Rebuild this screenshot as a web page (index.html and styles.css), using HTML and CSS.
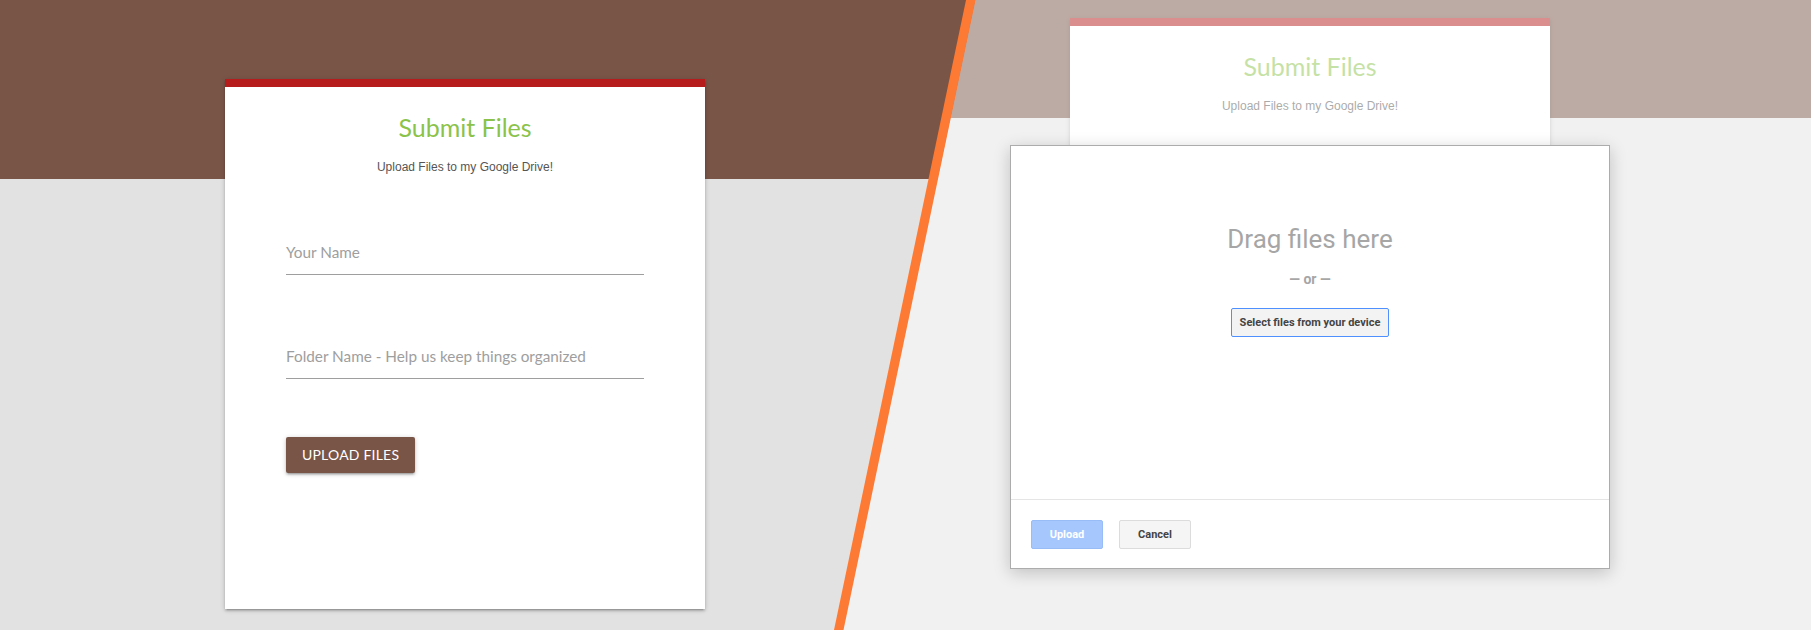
FILE: index.html
```html
<!DOCTYPE html>
<html lang="en">
<head>
<meta charset="utf-8">
<title>Submit Files</title>
<link rel="stylesheet" href="styles.css">
</head>
<body>
<div class="stage">
  <section class="scene scene--live">
    <div class="card">
      <h1 class="card__title">Submit Files</h1>
      <p class="card__subtitle">Upload Files to my Google Drive!</p>
      <form class="form">
        <div class="field"><input type="text" placeholder="Your Name"></div>
        <div class="field"><input type="text" placeholder="Folder Name - Help us keep things organized"></div>
        <button type="button" class="btn">Upload Files</button>
      </form>
    </div>
  </section>

  <section class="scene scene--picker">
    <div class="card">
      <h1 class="card__title">Submit Files</h1>
      <p class="card__subtitle">Upload Files to my Google Drive!</p>
      <form class="form">
        <div class="field"><input type="text" placeholder="Your Name"></div>
        <div class="field"><input type="text" placeholder="Folder Name - Help us keep things organized"></div>
        <button type="button" class="btn">Upload Files</button>
      </form>
    </div>
    <div class="picker">
      <div class="picker__drop">
        <div class="picker__headline">Drag files here</div>
        <div class="picker__or">&mdash; or &mdash;</div>
        <button type="button" class="picker__select">Select files from your device</button>
      </div>
      <div class="picker__footer">
        <button type="button" class="pbtn pbtn--primary">Upload</button>
        <button type="button" class="pbtn pbtn--default">Cancel</button>
      </div>
    </div>
  </section>

  <div class="stripe"></div>
</div>
</body>
</html>
```

FILE: styles.css
```css
html, body {
  margin: 0;
  padding: 0;
}

body {
  width: 1811px;
  height: 630px;
  overflow: hidden;
  background: #e2e2e2;
}

.stage {
  display: grid;
  width: 1811px;
  height: 630px;
  overflow: hidden;
}

.scene,
.stripe {
  grid-area: 1 / 1;
}

.scene {
  position: relative;
  height: 630px;
  overflow: hidden;
}

.scene--live {
  z-index: 0;
  background: linear-gradient(#795548 0, #795548 179px, #e2e2e2 179px);
}

.scene--live .card {
  margin: 79px 0 0 225px;
}

.scene--picker {
  z-index: 1;
  background: linear-gradient(#795548 0, #795548 118px, #e2e2e2 118px);
  clip-path: polygon(975px 0, 100% 0, 100% 100%, 843px 100%);
}

.scene--picker::after {
  content: "";
  position: absolute;
  inset: 0;
  z-index: 1;
  background: rgba(255, 255, 255, 0.5);
}

.scene--picker .card {
  margin: 18px 0 0 1070px;
}

.stripe {
  position: relative;
  z-index: 2;
  background: #fd7a35;
  clip-path: polygon(966px 0, 975.5px 0, 843.5px 100%, 834px 100%);
}

/* Card */
.card {
  width: 480px;
  height: 530px;
  box-sizing: border-box;
  background: #fff;
  border-top: 8px solid #b71c1c;
  padding: 25px 61px 0;
  box-shadow: 0 2px 2px 0 rgba(0, 0, 0, 0.14), 0 3px 1px -2px rgba(0, 0, 0, 0.12), 0 1px 5px 0 rgba(0, 0, 0, 0.2);
}

.card__title {
  margin: 0;
  font: 400 25px/31px Lato, "Open Sans", sans-serif;
  color: #8bc34a;
  text-align: center;
}

.card__subtitle {
  margin: 16px 0 0;
  font: 400 12px/16px "Liberation Sans", Arial, sans-serif;
  color: #555;
  text-align: center;
}

.form {
  margin: 55px 0 0;
}

.field input {
  display: block;
  width: 100%;
  height: 45px;
  box-sizing: border-box;
  margin: 0;
  padding: 0;
  border: 0;
  border-bottom: 1px solid #9e9e9e;
  background: transparent;
  outline: none;
  font: 400 15.3px Lato, "Open Sans", sans-serif;
  color: #333;
}

.field input::placeholder {
  color: #9e9e9e;
  opacity: 1;
}

.field + .field {
  margin-top: 59px;
}

.btn {
  display: block;
  margin-top: 58px;
  height: 36px;
  padding: 0 16px;
  border: 0;
  border-radius: 2px;
  background: #795548;
  color: #fff;
  font: 400 14px/36px Lato, "Open Sans", sans-serif;
  letter-spacing: 0.2px;
  text-transform: uppercase;
  box-shadow: 0 2px 2px 0 rgba(0, 0, 0, 0.14), 0 3px 1px -2px rgba(0, 0, 0, 0.12), 0 1px 5px 0 rgba(0, 0, 0, 0.2);
}

/* Google picker dialog */
.picker {
  position: absolute;
  z-index: 2;
  left: 1010px;
  top: 145px;
  width: 600px;
  height: 424px;
  box-sizing: border-box;
  border: 1px solid #acacac;
  background: #fff;
  box-shadow: 0 4px 16px rgba(0, 0, 0, 0.2);
  display: flex;
  flex-direction: column;
  font-family: Roboto, Arial, sans-serif;
}

.picker__drop {
  flex: 1;
  display: flex;
  flex-direction: column;
  align-items: center;
  padding-top: 78px;
}

.picker__headline {
  font-size: 26px;
  line-height: 30px;
  color: #a6a6a6;
}

.picker__or {
  margin-top: 16px;
  font: 700 14px/18px Roboto, Arial, sans-serif;
  color: #a6a6a6;
}

.picker__select {
  margin-top: 20px;
  height: 29px;
  box-sizing: border-box;
  padding: 0 8px;
  border: 1px solid #4d90fe;
  border-radius: 2px;
  background: #f3f3f3;
  color: #444;
  font: 700 11px/27px Roboto, Arial, sans-serif;
}

.picker__footer {
  height: 69px;
  box-sizing: border-box;
  border-top: 1px solid #e5e5e5;
  padding: 20px 0 0 20px;
  display: flex;
  align-items: flex-start;
  gap: 16px;
}

.pbtn {
  width: 72px;
  height: 29px;
  box-sizing: border-box;
  padding: 0;
  border-radius: 2px;
  font: 700 11px/27px Roboto, Arial, sans-serif;
  text-align: center;
}

.pbtn--primary {
  background: #a6c7fe;
  border: 1px solid #97bcf6;
  color: #fff;
}

.pbtn--default {
  background: #f5f5f5;
  border: 1px solid #dcdcdc;
  color: #444;
}
```
